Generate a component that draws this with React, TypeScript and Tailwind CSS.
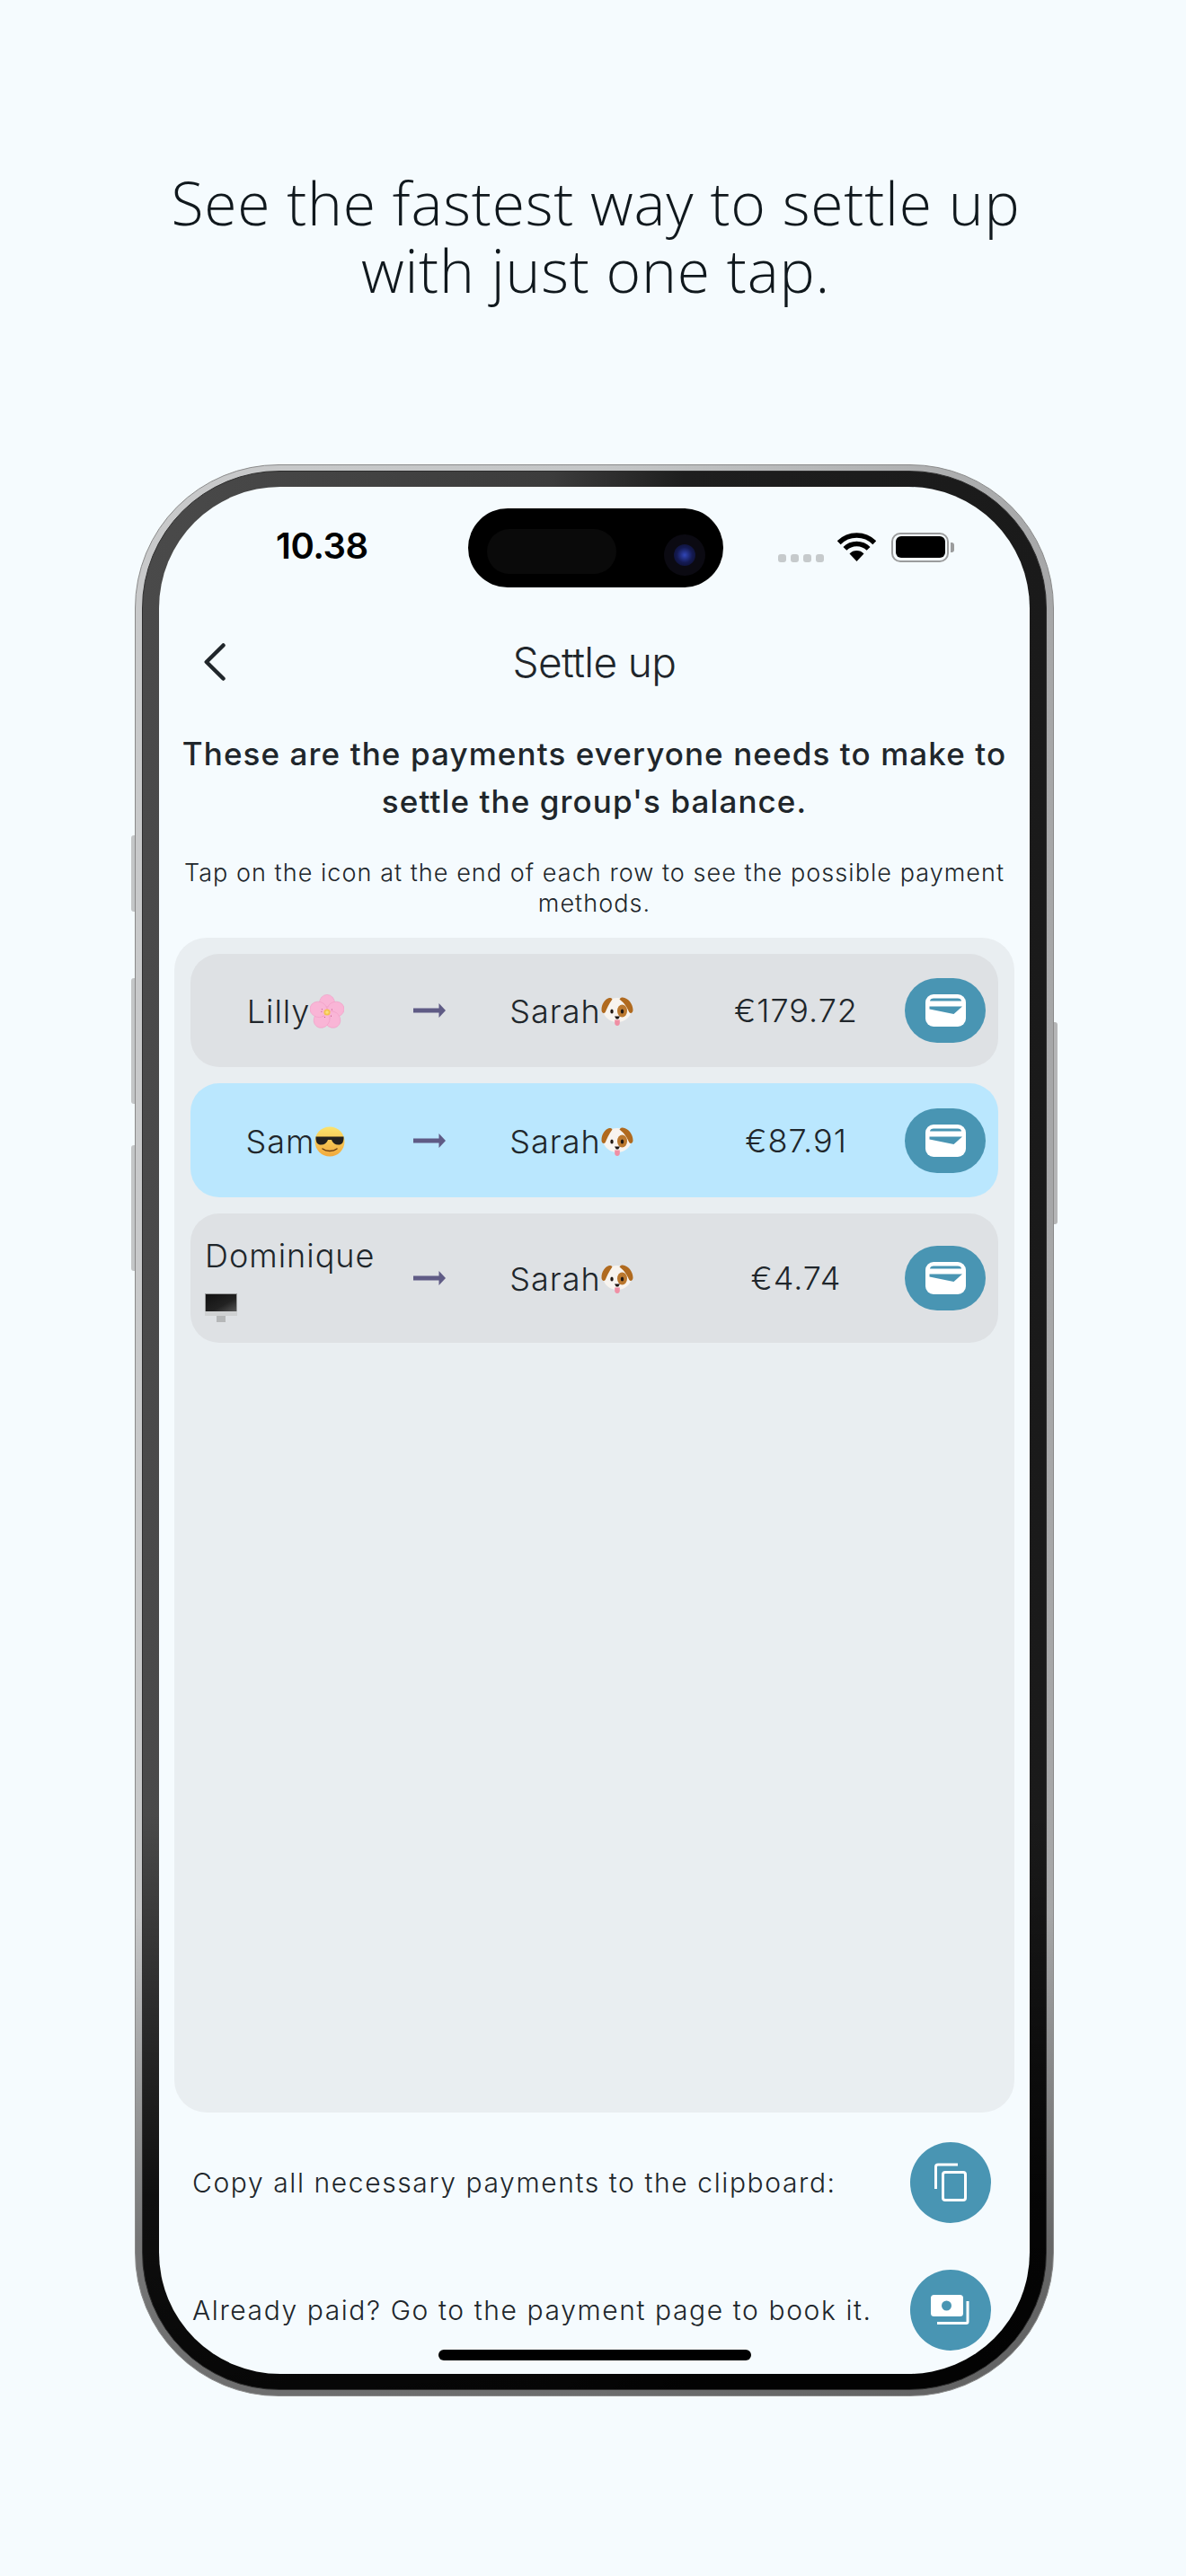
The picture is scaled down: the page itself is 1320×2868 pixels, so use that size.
const inter = "font-['Inter',sans-serif]";

function Flower() {
  const angles = [0, 72, 144, 216, 288];
  return (
    <svg viewBox="0 0 38 38" className="inline-block h-[38px] w-[38px] shrink-0">
      {angles.map((a) => (
        <g key={a} transform={`rotate(${a} 19 20)`}>
          <ellipse cx="19" cy="10" rx="8.600" ry="9.600" fill="#f9b5d6" stroke="#f29cc6" strokeWidth="0.600" />
          <circle cx="17.800" cy="14" r="0.500" fill="#b0356f" />
          <circle cx="20.400" cy="13.600" r="0.500" fill="#b0356f" />
        </g>
      ))}
      <circle cx="19" cy="20" r="3.600" fill="#f3c24f" />
      <circle cx="19" cy="20" r="1.800" fill="#f9de7e" />
    </svg>
  );
}

function Dog() {
  return (
    <svg viewBox="0 0 36 36" className="inline-block h-[36px] w-[36px] shrink-0">
      <ellipse cx="18" cy="16.500" rx="15.500" ry="13.500" fill="#f8f4ef" />
      <path d="M9 3C4 4.500.5 10 .5 16.500c0 3.500 2.800 4.500 4.200 2.500C6.500 15 8.500 10 12.500 4.500 11.500 3 10.200 2.700 9 3Z" fill="#b06a1f" />
      <path d="M24 2.500c6 .5 11.500 7 11.500 14 0 3.500-2.800 4.500-4.200 2.500C29.500 15 27 9.500 20.500 4.500 21.500 3 22.800 2.400 24 2.500Z" fill="#b06a1f" />
      <ellipse cx="23.500" cy="17.500" rx="5.500" ry="7" fill="#bb782e" />
      <ellipse cx="12" cy="18" rx="1.700" ry="2.500" fill="#231a14" />
      <ellipse cx="23.500" cy="18" rx="1.700" ry="2.500" fill="#231a14" />
      <path d="M15 23.500h6l-1.800 3h-2.400Z" fill="#1c1512" />
      <path d="M15.200 27.500h5.600v3.600a2.800 2.800 0 0 1-5.600 0Z" fill="#f08fa4" />
    </svg>
  );
}

function Sunglasses() {
  return (
    <svg viewBox="0 0 34 34" className="inline-block h-[34px] w-[34px] shrink-0">
      <defs>
        <linearGradient id="face" x1="0" y1="0" x2="0" y2="1">
          <stop offset="0" stopColor="#fbe36d" />
          <stop offset="1" stopColor="#f2a93c" />
        </linearGradient>
      </defs>
      <circle cx="17" cy="17" r="16.500" fill="url(#face)" />
      <path d="M1.500 11.500h31v2.500c-.6 4-1.500 6.500-6 6.500-4 0-6.500-2.500-7.500-5.500h-4c-1 3-3.500 5.500-7.500 5.500-4.500 0-5.400-2.500-6-6.500Z" fill="#23211f" />
      <path d="M9 25c4 3.200 12 3.200 16 0" fill="none" stroke="#6d3f12" strokeWidth="1.500" strokeLinecap="round" />
    </svg>
  );
}

function Monitor() {
  return (
    <svg viewBox="0 0 36 32" className="mt-[19px] block h-[32px] w-[36px]">
      <defs>
        <linearGradient id="screen" x1="0" y1="0" x2="1" y2="1">
          <stop offset="0" stopColor="#111" />
          <stop offset="0.6" stopColor="#222" />
          <stop offset="1" stopColor="#555" />
        </linearGradient>
      </defs>
      <rect x="0" y="0" width="36" height="20" fill="#9b9d9e" />
      <rect x="1" y="1" width="34" height="19" fill="url(#screen)" />
      <rect x="0" y="20" width="36" height="5" fill="#cfd1d2" />
      <rect x="13" y="25" width="10" height="7" fill="#b5b7b8" />
    </svg>
  );
}

function Arrow() {
  return (
    <svg viewBox="0 0 36 16" className="block h-[16px] w-[36px]">
      <rect x="0" y="5.500" width="30" height="5" fill="#5f5b85" />
      <path d="M28.500 0 36 8l-7.500 8Z" fill="#5f5b85" />
    </svg>
  );
}

function WalletButton() {
  return (
    <div className="flex h-[72px] w-[90px] items-center justify-center rounded-full bg-[#4995b3]">
      <svg viewBox="0 0 45 36" className="h-[36px] w-[45px]">
        <rect width="45" height="36" rx="9" fill="#fff" />
        <path d="M5 7.500C5 5.500 7 4.500 9 4.500h27c2 0 4 1 4 3Z" fill="#4995b3" />
        <path d="M4.500 13.500 41 13.500 31.500 22 4.500 16.500Z" fill="#4995b3" />
      </svg>
    </div>
  );
}

function CopyButton() {
  return (
    <div className="flex h-[90px] w-[90px] items-center justify-center rounded-full bg-[#4995b3]">
      <svg viewBox="0 0 40 48" fill="none" stroke="#fff" strokeWidth="3" className="h-[48px] w-[40px]">
        <rect x="11.500" y="12.500" width="25" height="31" rx="2.500" />
        <path d="M3.500 31V6.500a2.500 2.500 0 0 1 2.500-2.500H28" />
      </svg>
    </div>
  );
}

function MoneyButton() {
  return (
    <div className="flex h-[90px] w-[90px] items-center justify-center rounded-full bg-[#4995b3]">
      <svg viewBox="0 0 46 36" className="h-[36px] w-[46px]">
        <rect x="1" y="1" width="36" height="24" rx="3.500" fill="#fff" />
        <circle cx="18.500" cy="13" r="5.500" fill="#4995b3" />
        <path d="M8 32.500h32.500a1.500 1.500 0 0 0 1.500-1.500V8" fill="none" stroke="#fff" strokeWidth="3" />
      </svg>
    </div>
  );
}

function Row({
  name,
  emoji,
  amount,
  active,
  tall,
}: {
  name: string;
  emoji: React.ReactNode;
  amount: string;
  active?: boolean;
  tall?: boolean;
}) {
  return (
    <div
      className={`grid grid-cols-[16px_202px_30px_36px_37px_206px_1fr_90px_14px] items-center rounded-[32px] ${
        active ? "h-[127px] bg-[#bae7fe]" : tall ? "h-[144px] bg-[#dee1e4]" : "h-[126px] bg-[#dee1e4]"
      }`}
    >
      <div />
      {tall ? (
        <div className="leading-[46px]">
          <div>{name}</div>
          {emoji}
        </div>
      ) : (
        <div className="flex items-center justify-center pt-[2px]">
          {name}
          {emoji}
        </div>
      )}
      <div />
      <Arrow />
      <div />
      <div className="flex items-center justify-center pt-[2px]">
        Sarah
        <Dog />
      </div>
      <div className="pl-[26px] text-center">{amount}</div>
      <WalletButton />
      <div />
    </div>
  );
}

export default function App() {
  return (
    <div className="flex h-[2868px] w-[1320px] flex-col items-center overflow-hidden bg-[#f5fbfe] pt-[188px] text-[#20262b]">
      <h1 className="ml-[6px] text-center font-['Open_Sans',sans-serif] text-[66px] leading-[75px] font-light tracking-[0.8px] text-[#10181d]">
        See the fastest way to settle up
        <br />
        with just one tap.
      </h1>

      {/* phone frame */}
      <div className="relative mt-[179px] ml-[3px] h-[2151px] w-[1023px] rounded-[160px] border border-[#8a8a8a] bg-[linear-gradient(180deg,transparent_0%,transparent_75%,rgba(50,50,50,0.55)_92%,rgba(50,50,50,0.6)_100%),linear-gradient(90deg,#c8c9ca_0%,#c4c6c7_50%,#a6a7a8_100%)] px-[7px] py-[6px]">
        <div className="absolute top-[412px] left-[-5px] h-[85px] w-[4px] rounded-l-[3px] bg-[#c4c6c7]" />
        <div className="absolute top-[571px] left-[-5px] h-[140px] w-[4px] rounded-l-[3px] bg-[#c4c6c7]" />
        <div className="absolute top-[757px] left-[-5px] h-[140px] w-[4px] rounded-l-[3px] bg-[#c4c6c7]" />
        <div className="absolute top-[620px] right-[-5px] h-[225px] w-[4px] rounded-r-[3px] bg-[#b5b6b7]" />

        <div className="h-full w-full rounded-[153px] border border-[#2e2e2e] bg-[linear-gradient(180deg,transparent_0%,transparent_70%,rgba(0,0,0,0.8)_90%,rgba(0,0,0,0.9)_100%),linear-gradient(90deg,#4a4a4a_0%,#3c3c3c_45%,#1e1e1e_60%,#1a1a1a_100%)] pt-[17px] pl-[18px]">
          <div className={`relative h-[2101px] w-[969px] overflow-hidden rounded-[135px] bg-[#f5fbfe] pt-[24px] ${inter}`}>
            {/* status bar */}
            <div className="flex h-[88px] items-center">
              <span className="mb-[5px] ml-[130px] w-[104px] text-[40px] leading-none font-semibold tracking-[-0.5px] text-black">
                10.38
              </span>
              <div className="relative ml-[110px] h-[88px] w-[284px] rounded-[44px] bg-black">
                <div className="absolute top-[23px] left-[21px] h-[50px] w-[144px] rounded-[25px] bg-[#0a0a0a]" />
                <div className="absolute top-[29px] left-[218px] flex h-[46px] w-[46px] items-center justify-center rounded-full bg-[#0b0a12]">
                  <div className="h-[24px] w-[24px] rounded-full bg-[radial-gradient(circle,#3146b8_0%,#141a52_50%,#0a0c24_100%)]" />
                </div>
              </div>
              <div className="mt-[22px] ml-[61px] flex gap-[5px]">
                <span className="h-[9px] w-[9px] rounded-[3px] bg-[#c6cacc]" />
                <span className="h-[9px] w-[9px] rounded-[3px] bg-[#c6cacc]" />
                <span className="h-[9px] w-[9px] rounded-[3px] bg-[#c6cacc]" />
                <span className="h-[9px] w-[9px] rounded-[3px] bg-[#c6cacc]" />
              </div>
              <svg viewBox="0 0 43 32" fill="none" stroke="#000" strokeWidth="5.500" className="mb-[2px] ml-[15px] h-[32px] w-[43px]">
                <path d="M1.700 11.200a28 28 0 0 1 39.600 0" />
                <path d="M8.400 17.900a18.500 18.500 0 0 1 26.200 0" />
                <path d="M21.500 32 13.500 23.500a11 11 0 0 1 16 0Z" fill="#000" stroke="none" />
              </svg>
              <div className="mb-[2px] ml-[17px] flex items-center">
                <div className="h-[33px] w-[64px] rounded-[10px] border-[2.5px] border-[#9b9c9d] p-[2.5px]">
                  <div className="h-full w-full rounded-[6px] bg-black" />
                </div>
                <div className="ml-[2px] h-[11px] w-[4px] rounded-r-[3px] bg-[#9b9c9d]" />
              </div>
            </div>

            {/* nav bar */}
            <div className="relative mt-[41px] flex h-[84px] items-center justify-center">
              <svg viewBox="0 0 24 42" fill="none" stroke="#20262b" strokeWidth="4.500" strokeLinecap="round" strokeLinejoin="round" className="absolute left-[50px] h-[42px] w-[24px]">
                <path d="M21.500 2.500 2.800 21 21.500 39.500" />
              </svg>
              <span className="text-[46px] leading-none font-[350] tracking-[-0.6px]">Settle up</span>
            </div>

            <p className="mx-auto mt-[34px] w-[930px] text-center text-[35px] leading-[53px] font-[450] tracking-[1.1px]">
              These are the payments everyone needs to make to settle the group's balance.
            </p>
            <p className="mx-auto mt-[36px] w-[930px] text-center text-[27px] leading-[34px] font-[350] tracking-[1.05px]">
              Tap on the icon at the end of each row to see the possible payment methods.
            </p>

            {/* payments */}
            <div className="mx-[17px] mt-[21px] flex h-[1308px] flex-col gap-[18px] rounded-[36px] bg-[#e9eef1] p-[18px] text-[36px] font-[350] tracking-[1px]">
              <Row name="Lilly" emoji={<Flower />} amount="€179.72" />
              <Row name="Sam" emoji={<Sunglasses />} amount="€87.91" active />
              <Row name="Dominique" emoji={<Monitor />} amount="€4.74" tall />
            </div>

            <div className="mt-[33px] flex h-[90px] items-center justify-between pr-[43px] pl-[37px] text-[30px] font-[350] tracking-[1.6px]">
              <span>Copy all necessary payments to the clipboard:</span>
              <CopyButton />
            </div>
            <div className="mt-[52px] flex h-[90px] items-center justify-between pr-[43px] pl-[37px] text-[30px] font-[350] tracking-[1.6px]">
              <span>Already paid? Go to the payment page to book it.</span>
              <MoneyButton />
            </div>

            <div className="absolute bottom-[15px] left-[311px] h-[12px] w-[348px] rounded-full bg-black" />
          </div>
        </div>
      </div>
    </div>
  );
}
